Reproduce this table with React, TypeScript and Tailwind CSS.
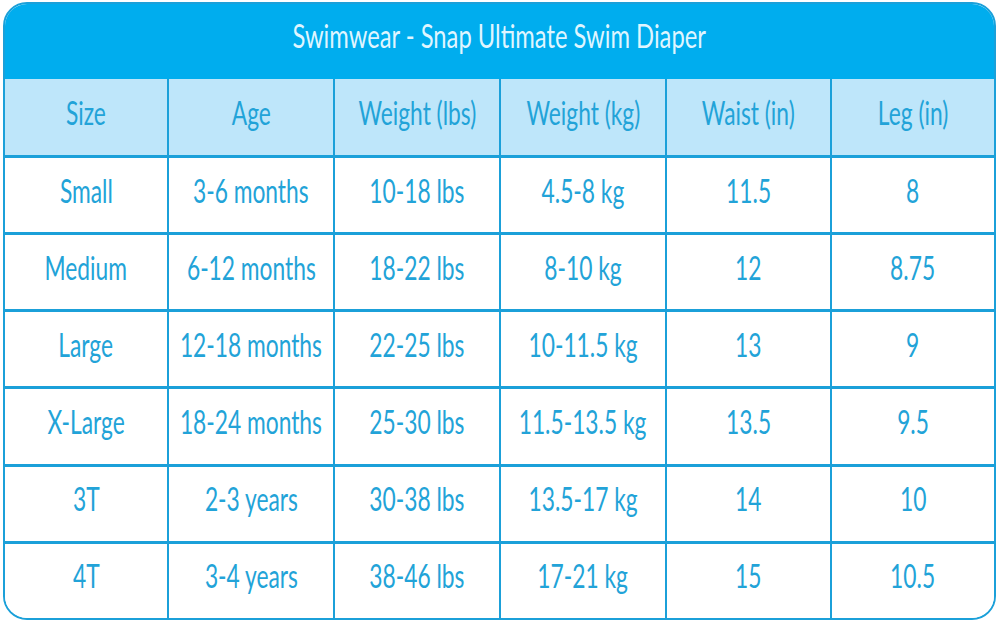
const headers = ['Size', 'Age', 'Weight (lbs)', 'Weight (kg)', 'Waist (in)', 'Leg (in)'];

const rows = [
  ['Small', '3-6 months', '10-18 lbs', '4.5-8 kg', '11.5', '8'],
  ['Medium', '6-12 months', '18-22 lbs', '8-10 kg', '12', '8.75'],
  ['Large', '12-18 months', '22-25 lbs', '10-11.5 kg', '13', '9'],
  ['X-Large', '18-24 months', '25-30 lbs', '11.5-13.5 kg', '13.5', '9.5'],
  ['3T', '2-3 years', '30-38 lbs', '13.5-17 kg', '14', '10'],
  ['4T', '3-4 years', '38-46 lbs', '17-21 kg', '15', '10.5'],
];

function Cell({ text, first, header }: { text: string; first: boolean; header?: boolean }) {
  return (
    <div
      className={`flex items-center justify-center pb-[10px] ${first ? '' : 'border-l-2 border-[#1ba0d9]'} ${
        header ? 'bg-[#bee6fa]' : 'bg-white border-t-[3px] border-t-[#1ba0d9]'
      }`}
    >
      <span className="inline-block scale-x-[0.69] whitespace-nowrap text-[33px] leading-none text-[#22a3d8]">
        {text}
      </span>
    </div>
  );
}

export default function App() {
  return (
    <div className="h-[625px] w-[1000px] bg-white pl-[3px] pt-[2px] font-['Lato',sans-serif]">
      <div className="flex h-[618px] w-[993px] flex-col overflow-hidden rounded-[24px] border-2 border-[#1ba0d9]">
        <div className="flex h-[75px] shrink-0 items-center justify-center bg-[#00adee] pb-[12px]">
          <span className="inline-block scale-x-[0.72] whitespace-nowrap text-[33px] leading-none text-[#dff5ff]">
            Swimwear - Snap Ultimate Swim Diaper
          </span>
        </div>
        <div className="grid flex-1 grid-cols-[162px_166px_166px_166px_165px_1fr] grid-rows-[76px_repeat(6,1fr)]">
          {headers.map((h, i) => (
            <Cell key={h} text={h} first={i === 0} header />
          ))}
          {rows.map((r) =>
            r.map((c, i) => <Cell key={r[0] + i} text={c} first={i === 0} />)
          )}
        </div>
      </div>
    </div>
  );
}
